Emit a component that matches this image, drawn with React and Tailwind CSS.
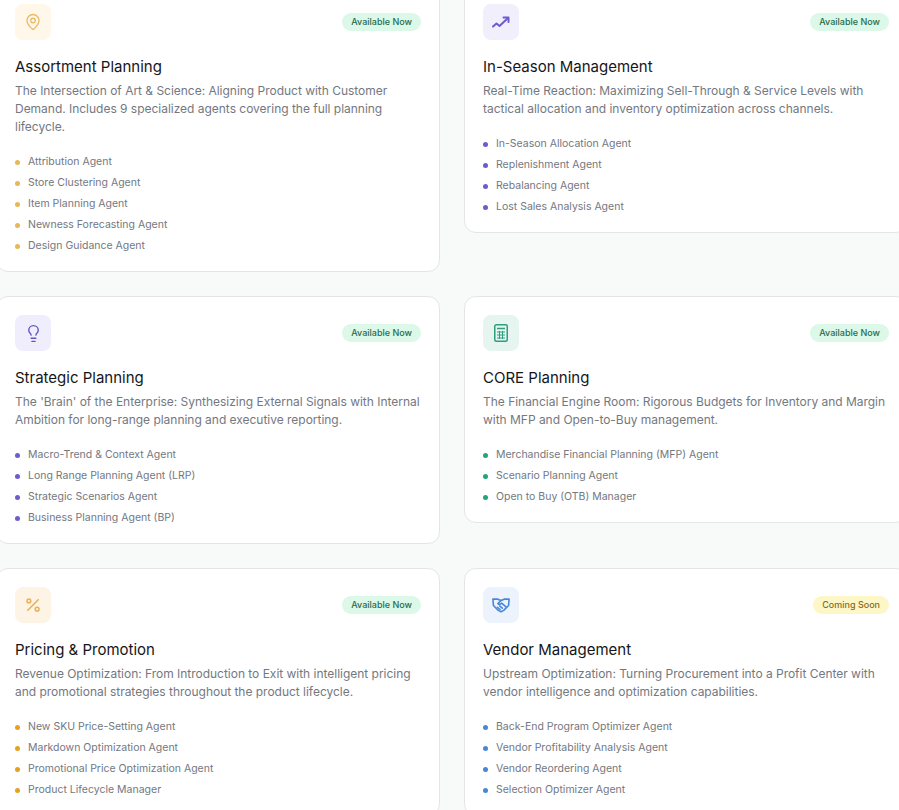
import { MapPin, Lightbulb, Percent } from 'lucide-react';

function TrendIcon() {
  return (
    <svg width="20" height="20" viewBox="0 0 20 20" fill="none" stroke="#6d5bd0" strokeWidth="2" strokeLinecap="round" strokeLinejoin="round">
      <path d="M2 14.500 5.500 11.500l3 2.500 8.500-8" />
      <path d="M12.500 5.500h5v4.500" />
    </svg>
  );
}

function CalcIcon() {
  return (
    <svg width="20" height="20" viewBox="0 0 20 20" fill="none" stroke="#2f9e7e">
      <rect x="3.75" y="1.75" width="12.5" height="16.5" rx="1.5" strokeWidth="1.5" />
      <path d="M6 5.500h8" strokeWidth="1.500" />
      <path d="M6 9h8M6 12h8M6 15h8M8.500 8v8M11.500 8v8" strokeWidth="1" />
    </svg>
  );
}

function HandshakeIcon() {
  return (
    <svg width="20" height="18" viewBox="0 0 22 20" fill="none" stroke="#4a86d8" strokeWidth="1.800" strokeLinecap="round" strokeLinejoin="round">
      <path d="M2 3.500h5.500L11 5l3.500-1.500H20l-.6 7-5.400 5.500-3 1.500-3-1.500-5.400-5.500z" />
      <path d="M11 5 7.500 8.500c1.500 1.200 3 .8 4.200-.5l4.800 4" />
      <path d="M7 12.500l3 2.500M9.500 11l3 2.500" />
    </svg>
  );
}

const cards = [
  {
    title: 'Assortment Planning',
    desc: 'The Intersection of Art & Science: Aligning Product with Customer Demand. Includes 9 specialized agents covering the full planning lifecycle.',
    icon: <MapPin size={18} strokeWidth={1.75} className="text-[#eabb66]" />,
    iconBg: 'bg-[#fef7ea]',
    dot: 'bg-[#e8b858]',
    agents: ['Attribution Agent', 'Store Clustering Agent', 'Item Planning Agent', 'Newness Forecasting Agent', 'Design Guidance Agent'],
  },
  {
    title: 'In-Season Management',
    desc: 'Real-Time Reaction: Maximizing Sell-Through & Service Levels with tactical allocation and inventory optimization across channels.',
    icon: <TrendIcon />,
    iconBg: 'bg-[#f1effc]',
    dot: 'bg-[#6d5bd0]',
    agents: ['In-Season Allocation Agent', 'Replenishment Agent', 'Rebalancing Agent', 'Lost Sales Analysis Agent'],
  },
  {
    title: 'Strategic Planning',
    desc: "The 'Brain' of the Enterprise: Synthesizing External Signals with Internal Ambition for long-range planning and executive reporting.",
    icon: <Lightbulb size={19} strokeWidth={1.75} className="text-[#5f57c0]" />,
    iconBg: 'bg-[#f0eefc]',
    dot: 'bg-[#6d5bd0]',
    agents: ['Macro-Trend & Context Agent', 'Long Range Planning Agent (LRP)', 'Strategic Scenarios Agent', 'Business Planning Agent (BP)'],
  },
  {
    title: 'CORE Planning',
    desc: 'The Financial Engine Room: Rigorous Budgets for Inventory and Margin with MFP and Open-to-Buy management.',
    icon: <CalcIcon />,
    iconBg: 'bg-[#e6f5f0]',
    dot: 'bg-[#1fa67a]',
    agents: ['Merchandise Financial Planning (MFP) Agent', 'Scenario Planning Agent', 'Open to Buy (OTB) Manager'],
  },
  {
    title: 'Pricing & Promotion',
    desc: 'Revenue Optimization: From Introduction to Exit with intelligent pricing and promotional strategies throughout the product lifecycle.',
    icon: <Percent size={18} strokeWidth={2} className="text-[#e8b055]" />,
    iconBg: 'bg-[#fdf4e6]',
    dot: 'bg-[#e5a11f]',
    agents: ['New SKU Price-Setting Agent', 'Markdown Optimization Agent', 'Promotional Price Optimization Agent', 'Product Lifecycle Manager'],
  },
  {
    title: 'Vendor Management',
    desc: 'Upstream Optimization: Turning Procurement into a Profit Center with vendor intelligence and optimization capabilities.',
    icon: <HandshakeIcon />,
    iconBg: 'bg-[#edf3fc]',
    dot: 'bg-[#4a86d8]',
    agents: ['Back-End Program Optimizer Agent', 'Vendor Profitability Analysis Agent', 'Vendor Reordering Agent', 'Selection Optimizer Agent'],
    soon: true,
  },
];

function Card({ card }) {
  return (
    <div className="rounded-xl border border-[#e3e6e6] bg-white px-[18px] pt-[18px] pb-[16px]">
      <div className="flex items-center justify-between">
        <div className={`flex h-9 w-9 items-center justify-center rounded-lg ${card.iconBg}`}>{card.icon}</div>
        {card.soon ? (
          <span className="rounded-full bg-[#fdf7c8] px-[9px] py-[2px] text-[9px] leading-[14px] font-medium text-[#8a6a24]">Coming Soon</span>
        ) : (
          <span className="rounded-full bg-[#dcf8e8] px-[9px] py-[2px] text-[9px] leading-[14px] font-medium text-[#2a6b4a]">Available Now</span>
        )}
      </div>
      <h3 className="mt-[15px] text-[15px] leading-[24px] font-normal text-[#14161a]">{card.title}</h3>
      <p className="mt-[3px] text-[12px] leading-[18px] tracking-[-0.02px] text-[#73787f]">{card.desc}</p>
      <ul className="mt-[17px] flex flex-col gap-[3px]">
        {card.agents.map((a) => (
          <li key={a} className="flex items-center gap-[8px] text-[10.5px] leading-[18px] text-[#73787f]">
            <span className={`h-[5px] w-[5px] rounded-full ${card.dot}`} />
            {a}
          </li>
        ))}
      </ul>
    </div>
  );
}

export default function App() {
  return (
    <div className="h-[810px] w-[899px] overflow-hidden bg-[#f8faf9] font-['Inter',sans-serif]">
      <div className="-mt-[15px] -ml-[4px] grid w-[912px] grid-cols-2 items-start gap-x-[24px] gap-y-[24px]">
        {cards.map((c) => (
          <Card key={c.title} card={c} />
        ))}
      </div>
    </div>
  );
}
